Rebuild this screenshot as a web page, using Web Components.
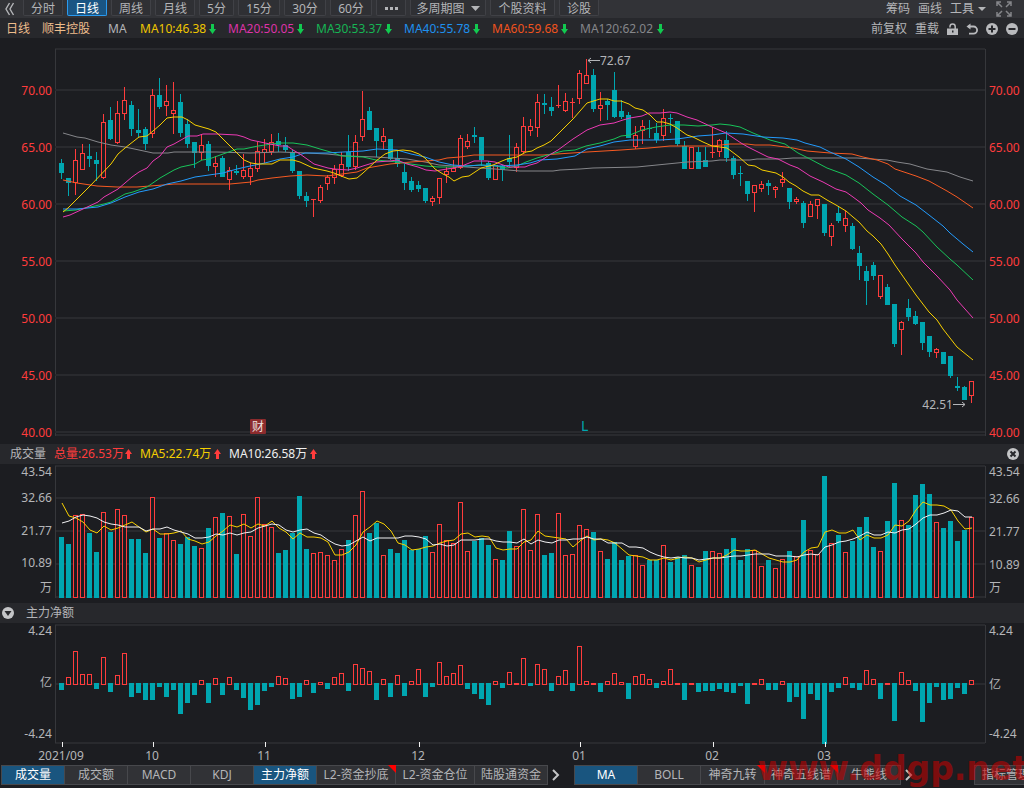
<!DOCTYPE html>
<html lang="zh-CN">
<head>
<meta charset="utf-8">
<title>顺丰控股 日线</title>
<style>
html,body{margin:0;background:#1c1d21;overflow-x:hidden}
body{font-family:"Noto Sans","Noto Sans CJK SC",sans-serif;font-size:12px;line-height:16px;color:#b4b5b8}
</style>
</head>
<body>
<stock-app></stock-app>

<script>
const UP = '#ff3c3c', DOWN = '#00a6b0', GRID = '#292a2e', FRAME = '#36373b', TEXT = '#b4b5b8';
const LEFT = 55, RIGHT = 39, BASE = 930;

/* each candle: direction, high, body top, body bottom, low */
const candles = `D159,163,173,179 D178,178,183,196 U149,160,183,195 U144,153,170,170 D144,156,159,167 D152,160,164,181 U114,122,178,179 D107,120,139,140 U101,113,143,144 U87,100,114,120
D101,105,129,136 D109,130,133,137 D127,129,144,150 U89,95,134,138 D78,95,107,109 U85,101,106,116 U82,110,114,134 D94,102,133,137 D119,124,144,148 D142,142,153,168
U134,145,153,160 D141,144,166,171 U156,163,167,177 D156,158,177,177 U167,170,180,190 D165,171,173,175 U154,170,177,179 U163,168,177,185 U142,151,169,172 U139,149,153,163
U134,142,152,155 D133,141,145,152 D137,145,150,152 D150,152,171,173 D171,171,196,199 D192,196,201,207 U199,199,200,217 U185,187,201,203 U175,177,184,190 U165,169,178,184
U152,164,176,177 D135,152,167,171 U135,142,167,170 U91,119,137,141 D107,111,130,130 D128,128,141,157 U128,136,142,149 D139,139,159,160 D150,158,164,167 D164,172,183,190
D177,181,190,192 D181,185,189,192 D188,188,201,203 U196,198,202,206 U178,178,198,204 U167,171,175,183 U160,168,172,172 U135,138,168,169 U134,141,147,149 D127,135,137,143
D137,137,160,166 D161,163,178,180 U165,165,180,180 D165,166,170,181 D135,158,162,168 U143,147,168,172 U117,126,152,153 U119,126,131,136 U94,102,128,137 D94,103,105,114
D97,107,111,116 U85,105,106,108 U93,101,111,112 U98,102,103,118 U70,73,99,104 U59,75,84,84 D69,75,109,112 U92,105,109,121 D99,101,105,120 D72,90,117,118
D100,111,117,119 D112,115,138,138 U126,135,147,149 U120,126,131,144 D120,128,129,138 D123,133,140,143 U109,118,136,141 D114,118,119,133 D121,121,144,146 D141,146,169,169
U147,147,169,169 D147,152,169,169 D147,160,167,167 U127,152,153,158 U139,140,152,157 D131,140,158,162 D156,158,175,179 D166,173,174,186 D181,181,194,201 U185,185,193,212
U181,184,189,192 D180,183,186,195 U186,187,190,198 U172,179,183,187 D188,188,202,209 U197,199,202,204 D201,203,223,228 U201,204,217,217 U199,199,206,219 D204,204,233,236
U223,225,237,246 D207,213,221,223 U211,218,226,232 D223,226,249,250 D246,253,266,280 D266,271,281,305 D262,265,276,280 U275,275,297,299 D284,287,305,305 D304,304,344,347
U321,322,330,355 D299,308,317,321 D311,316,324,325 D322,322,343,350 D336,336,352,357 U348,349,353,358 D352,352,364,364 D356,356,376,378 D377,386,388,391 D386,387,400,400 U381,381,396,403`
  .split(/\s+/).map(s => ({up: s[0] === 'U', v: s.slice(1).split(',').map(Number)}));

const nums = s => s.trim().split(/\s+/).map(Number);

const volume = nums(`537 544 515 514 533 552 512 532 509 515 539 539 553 497 538 533 540 544 537 546 548 528 517 513 516 554 514 536 497 524 527 553 550 533 496 549 553 552 555 560
549 540 515 491 533 523 555 549 553 540 550 549 536 552 524 540 543 502 551 541 538 545 559 560 531 546 509 550 514 555 553 513 555 554 525 529 532 551 559 542
560 556 555 565 560 560 545 562 557 555 565 567 551 551 553 549 538 560 549 550 566 560 568 559 551 556 520 550 554 476 543 535 552 541 527 517 547 551 521 483
520 525 495 484 494 522 528 521 541 530 517`);

const volMa5 = nums(`503 516 518 522 530 533 526 530 528 525 522 527 532 529 534 534 533 531 539 541 544 542 536 531 525 527 524 528 524 526 521 528 532 539 533 537 537 538 542 555
555 552 545 532 527 521 524 531 543 545 550 549 547 546 543 541 540 534 533 537 536 537 548 550 549 549 542 540 531 536 537 538 539 547 541 536 540 539 540 543
549 555 556 557 560 560 558 560 558 557 558 562 560 558 558 555 550 551 551 550 554 558 560 562 562 560 552 548 547 532 530 533 533 530 540 535 538 538 535 525
526 521 510 502 505 505 506 510 521 529 528`);

const volMa10 = nums(`523 521 517 515 516 518 522 524 525 527 527 527 531 529 529 527 530 532 534 538 538 537 534 535 533 535 533 532 528 526 524 525 530 532 530 529 533 535 540 544
546 545 541 537 541 538 538 538 538 536 536 537 539 545 544 546 545 540 540 540 539 539 541 542 542 543 539 544 540 542 543 540 540 539 539 537 539 539 543 543
543 547 547 548 552 555 557 558 557 558 558 560 559 558 558 557 556 556 555 554 554 554 556 556 556 557 555 554 555 547 545 542 541 539 536 532 535 535 532 533
530 529 524 518 515 515 513 510 511 517 517`);

/* end of each net-flow bar; the zero line is at 684 */
const flow = nums(`690 677 651 674 674 689 657 692 675 653 697 693 700 700 687 697 690 714 703 695 680 703 678 695 677 690 698 710 705 691 687 676 678 699 697 680 693 682 689 677
673 691 664 668 671 700 679 697 675 696 681 669 697 687 662 676 673 665 689 694 699 705 681 688 672 683 658 686 664 669 691 676 670 691 646 681 683 692 681 673
682 699 676 674 679 688 681 669 683 700 683 692 691 691 689 692 693 686 704 683 679 690 690 681 702 697 719 694 700 744 692 688 677 688 690 670 679 699 683 721
672 680 691 722 703 687 700 699 688 694 680`);

const averages = {
  '#85868a': '63,133 77,137 85,138 98,142 111,145 125,147 139,150 153,153 168,153 174,152 217,152 250,153 280,152 307,153 327,154 347,156 376,157 407,159 425,162 439,165 453,166 480,168 495,169 520,171 553,171 560,170 580,169 593,168 637,167 667,164 687,162 712,161 720,160 750,160 757,159 780,159 793,158 857,158 887,160 897,162 910,164 927,169 947,172 960,177 973,181',
  '#f75a22': '63,180 77,183 97,186 117,187 137,187 163,185 174,184 230,184 251,182 258,180 272,178 290,176 307,175 327,176 357,172 367,168 390,164 411,162 439,160 447,158 460,157 474,155 520,155 543,155 557,154 587,152 621,150 635,149 649,148 670,146 712,146 730,144 747,144 755,145 770,145 793,148 807,151 830,153 852,154 863,157 877,160 888,164 895,169 916,176 929,181 947,191 957,197 973,208',
  '#18c45a': '63,211 76,210 90,207 104,204 111,202 118,198 125,194 133,192 147,187 160,178 174,170 181,167 195,164 202,160 209,159 223,154 237,149 244,149 258,146 272,144 280,143 293,143 307,145 320,149 334,153 341,156 363,157 376,160 387,161 397,162 411,164 425,166 439,167 453,167 467,166 481,165 495,166 507,168 517,166 526,162 537,158 551,154 563,151 575,150 586,146 600,143 614,139 621,136 630,135 642,130 656,127 670,125 684,125 698,126 712,125 720,124 730,125 740,127 753,133 770,140 785,144 798,153 810,159 827,168 846,175 859,183 873,194 888,205 902,217 916,226 923,232 937,247 950,259 957,265 973,280',
  '#239bfc': '63,209 77,209 98,207 111,203 125,197 139,192 153,189 167,184 181,181 195,177 209,175 223,173 237,169 250,166 265,163 280,159 293,157 305,153 327,153 343,152 363,151 377,149 397,150 411,154 425,157 439,162 453,165 467,166 481,165 500,166 517,165 530,163 540,160 557,159 575,156 587,149 600,146 614,142 630,140 660,140 677,139 698,136 712,135 726,133 743,134 763,137 783,138 797,140 805,143 820,147 830,152 846,159 859,167 873,177 886,185 900,196 916,205 929,215 943,226 950,233 963,244 973,252',
  '#ec3ab4': '63,217 70,215 83,209 98,202 104,197 111,193 118,189 132,177 139,172 147,168 153,161 160,156 167,147 174,144 181,140 188,136 197,136 203,134 217,134 237,135 244,137 251,140 265,143 280,146 287,146 293,150 300,154 307,159 314,164 328,168 334,169 348,170 357,168 363,166 376,162 390,161 397,160 407,164 418,167 426,170 435,171 447,169 453,168 462,166 474,161 487,161 495,162 503,165 509,167 525,167 530,165 537,163 551,154 558,150 573,139 587,130 600,125 614,123 623,120 630,118 642,116 649,113 660,113 670,112 677,113 687,117 697,120 712,127 726,133 741,143 748,147 768,157 778,159 790,165 798,168 810,176 823,182 836,189 846,192 853,197 861,203 868,210 880,218 889,225 902,239 916,253 923,262 937,276 950,290 957,300 973,318',
  '#f8d000': '63,212 68,208 90,186 111,164 118,154 125,148 139,137 147,136 153,131 160,125 167,118 174,117 182,117 188,120 195,125 209,129 216,132 223,139 237,153 244,160 251,163 258,164 272,164 280,160 293,160 300,162 313,168 327,171 334,173 341,176 349,179 357,178 363,173 376,161 385,154 393,151 403,150 411,151 419,154 425,158 435,169 443,174 449,177 454,181 462,177 469,176 481,168 493,165 502,161 507,159 517,157 526,152 532,151 537,148 544,145 551,141 558,134 573,119 587,103 600,99 608,99 614,101 621,101 629,104 635,108 643,110 650,115 657,122 663,122 670,124 677,128 687,135 693,137 703,142 712,146 720,147 727,148 739,157 748,165 755,166 762,170 776,173 783,177 789,182 796,186 803,191 811,195 819,195 827,200 836,205 846,211 853,217 859,222 867,231 873,236 881,244 888,254 895,265 902,275 916,295 929,312 937,320 943,329 950,338 957,347 973,360'
};

/* Shared drawing surface: x positions follow the element's width. */
class ChartBase extends HTMLElement {
  connectedCallback() {
    if (!this.shadowRoot) this.attachShadow({mode: 'open'});
    this.draw();
    new ResizeObserver(() => this.draw()).observe(this);
  }
  draw() {
    const w = Math.max(400, this.clientWidth);
    if (w === this.w) return;
    this.w = w;
    this.k = (w - LEFT - RIGHT) / BASE;
    const [top, height] = this.frame;
    this.shadowRoot.innerHTML = `<style>
      :host{display:block;min-width:0}
      svg{display:block;width:100%;height:${height}px;font-size:12px}
      </style><svg viewBox="0 ${top} ${w} ${height}" role="img" aria-label="${this.label}">${this.content()}</svg>`;
  }
  px(x) { return Math.round(LEFT + (x - LEFT) * this.k); }
  right() { return this.w - RIGHT; }
  rule(y) { return `<rect x="${LEFT}" y="${y - 1}" width="${this.right() - LEFT}" height="2" fill="${GRID}"/>`; }
  sides(y1, y2) {
    return [LEFT, this.right()].map(x => `<rect x="${x}" y="${y1}" width="1" height="${y2 - y1}" fill="${FRAME}"/>`).join('');
  }
  axis(text, left, right, fill = TEXT) {
    return `<text x="52" y="${left + 5}" text-anchor="end" fill="${fill}">${text}</text>
      <text x="${this.w - 35}" y="${right + 5}" fill="${fill}">${text}</text>`;
  }
  bar(i, y1, y2, up) {
    const x = this.px(59 + 7 * i), h = Math.max(1, y2 - y1);
    return up && h > 1
      ? `<rect x="${x + .5}" y="${y1 + .5}" width="4" height="${h - 1}" fill="#1c1d21" stroke="${UP}"/>`
      : `<rect x="${x}" y="${y1}" width="5" height="${h}" fill="${up ? UP : DOWN}"/>`;
  }
  line(points, color) {
    return `<polyline points="${points.map(([x, y]) => `${this.px(x)},${y}`).join(' ')}" fill="none" stroke="${color}" stroke-width="1"/>`;
  }
}

customElements.define('price-chart', class extends ChartBase {
  frame = [38, 406];
  label = 'K线图';
  content() {
    let s = this.rule(49) + this.rule(435) + this.sides(49, 436);
    for (let p = 70, y = 90; p >= 40; p -= 5, y += 57) s += this.rule(y) + this.axis(p.toFixed(2), y, y, UP);
    candles.forEach((c, i) => {
      const [hi, a, b, lo] = c.v, x = this.px(59 + 7 * i) + 2;
      s += `<rect x="${x}" y="${hi}" width="1" height="${Math.max(1, lo - hi)}" fill="${c.up ? UP : DOWN}"/>` + this.bar(i, a, b, c.up);
    });
    for (const [color, pts] of Object.entries(averages)) s += this.line(pts.split(' ').map(p => p.split(',').map(Number)), color);
    const hi = this.px(588), lo = this.px(965), cai = this.px(250), l = this.px(582);
    s += `<path d="M${hi} 60.500h12M${hi + 3} 58l-3 2.500 3 2.500M${lo} 404.500h-12M${lo - 3} 402l3 2.500-3 2.500" fill="none" stroke="${TEXT}"/>
      <text x="${hi + 12}" y="65" fill="${TEXT}">72.67</text>
      <text x="${lo - 12}" y="409" text-anchor="end" fill="${TEXT}">42.51</text>
      <rect x="${cai}" y="419" width="16" height="15" rx="1" fill="#8c2b2d"/>
      <text x="${cai + 2}" y="431" fill="#f0e0e0">财</text>
      <text x="${l - 1}" y="431" font-size="14" fill="${DOWN}">L</text>`;
    return s;
  }
});

customElements.define('volume-chart', class extends ChartBase {
  frame = [464, 139];
  label = '成交量图';
  content() {
    let s = [466, 498, 531, 564, 597].map(y => this.rule(y)).join('') + this.sides(466, 598);
    s += this.axis('43.54', 471, 471) + this.axis('32.66', 497, 498) + this.axis('21.77', 530, 531) + this.axis('10.89', 562, 564) + this.axis('万', 587, 587);
    volume.forEach((y, i) => s += this.bar(i, y, 598, candles[i].up));
    const at = a => a.map((y, i) => [62 + 7 * i, y]);
    return s + this.line(at(volMa5), '#f8d000') + this.line(at(volMa10), '#f0f0f2');
  }
});

customElements.define('flow-chart', class extends ChartBase {
  frame = [623, 141];
  label = '主力净额图';
  content() {
    let s = [625, 684, 743].map(y => this.rule(y)).join('') + this.sides(625, 743);
    s += this.axis('4.24', 630, 630) + this.axis('亿', 682, 684) + this.axis('-4.24', 733, 733);
    flow.forEach((y, i) => s += y < 684 ? this.bar(i, y, 685, true) : this.bar(i, 683, y, false));
    for (const [t, i] of [['2021/09', 0], ['10', 13], ['11', 29], ['12', 51], ['01', 74], ['02', 93], ['03', 109]]) {
      const x = this.px(62 + 7 * i);
      s += `<rect x="${x}" y="742" width="1" height="5" fill="#f0f0f0"/><text x="${x - 1}" y="760" text-anchor="middle" fill="${TEXT}">${t}</text>`;
    }
    return s;
  }
});

const define = (name, html, ready) => {
  const t = document.createElement('template');
  t.innerHTML = html;
  customElements.define(name, class extends HTMLElement {
    connectedCallback() {
      if (this.shadowRoot) return;
      this.attachShadow({mode: 'open'}).append(t.content.cloneNode(true));
      if (ready) ready(this, this.shadowRoot);
    }
  });
};

const reset = `button{font:inherit;color:inherit;background:none;border:0;padding:0;margin:0;white-space:nowrap;display:flex;align-items:center;justify-content:center}`;

define('tool-button', `<style>${reset}
  :host{display:block;flex:none;width:var(--w,40px)}
  button{width:100%;height:16px;box-sizing:border-box;border:1px solid #404146;border-top:0;border-radius:0 0 2px 2px;padding-top:2px;background:#2f3034}
  :host([active]) button{background:#1a5583;border-color:#2a9bf0;color:#fff}
  </style><button type="button"><slot></slot></button>`);

define('plain-button', `<style>${reset}
  :host{display:block;flex:none}
  </style><button type="button"><slot></slot></button>`,
  (host, root) => { const l = host.getAttribute('label'); if (l) root.querySelector('button').setAttribute('aria-label', l); });

define('tab-button', `<style>${reset}
  :host{display:block;flex:none;width:var(--w,63px);position:relative}
  button{width:100%;height:20px;box-sizing:border-box;background:#313236;border:1px solid #47484c;border-left-width:0}
  :host([first]) button{border-left-width:1px}
  :host([active]) button{background:#19557f;color:#fff}
  i{display:none;position:absolute;right:0;top:0;border-top:8px solid #ff0000;border-left:8px solid transparent}
  :host([hot]) i{display:block}
  </style><button type="button"><slot></slot></button><i></i>`);

define('legend-value', `<style>
  :host{display:flex;flex:none;align-items:center;justify-content:space-between;width:var(--w,76px);white-space:nowrap}
  svg{display:block;width:7px;height:10px;fill:#12c950}
  :host([rise]) svg{transform:rotate(180deg);fill:#ff3c3c}
  </style><span><slot></slot></span><svg viewBox="0 0 7 10"><path d="M2 0h3v5h2L3.500 10 0 5h2z"/></svg>`);

define('panel-header', `<style>
  :host{display:flex;align-items:center;gap:8px;height:20px;box-sizing:border-box;padding:0 5px 0 10px;background:#27282c}
  ::slotted([slot=end]){margin-left:auto}
  </style><slot></slot><slot name="end"></slot>`);

define('stock-app', `<style>
  :host{display:block;overflow:hidden;background:#1c1d21;position:relative}
  svg{display:block;flex:none}
  .bar{display:flex;align-items:center;height:18px;background:#323337}
  .tools{display:flex;gap:4px;align-self:flex-start;margin-left:8px}
  .end{display:flex;align-items:center;margin-left:auto;gap:8px}
  .info{display:flex;align-items:center;height:20px;box-sizing:border-box;padding:2px 6px 0;background:#27282c}
  .name{color:#eebd8c;margin-right:12px}
  .ind{margin-left:6px;width:32px}
  .legend{display:flex;gap:12px}
  .down{margin-left:6px}
  .tabs{display:flex;align-items:center;height:24px;padding:0 0 2px 1px;box-sizing:border-box}
  .tabs>svg{margin:0 14px 0 4px}
  .manage{margin-left:auto;margin-right:-14px}
  .mark{position:absolute;right:-4px;bottom:-1px;font:bold 33px/40px "DejaVu Sans",sans-serif;color:#cd0000;opacity:.55;pointer-events:none}
  </style>
  <nav class="bar" aria-label="周期">
    <plain-button label="收起" style="margin-left:5px"><svg width="10" height="14" viewBox="0 0 10 14" fill="none" stroke="#b4b5b8" stroke-width="1.400"><path d="M4.500 1 1 7l3.500 6M8.500 1 5 7l3.500 6"/></svg></plain-button>
    <div class="tools">
      <tool-button>分时</tool-button><tool-button active>日线</tool-button><tool-button>周线</tool-button><tool-button>月线</tool-button>
      <tool-button style="--w:35px">5分</tool-button><tool-button style="--w:42px">15分</tool-button><tool-button style="--w:42px">30分</tool-button><tool-button style="--w:42px">60分</tool-button>
      <tool-button style="--w:30px"><svg width="14" height="4" viewBox="0 0 14 4" fill="#b4b5b8"><path d="M1 0h3v3H1zM6 0h3v3H6zM11 0h3v3h-3z"/></svg></tool-button>
      <tool-button style="--w:76px">多周期图<svg class="down" width="9" height="5" viewBox="0 0 9 5" fill="#b4b5b8"><path d="M0 0h9L4.500 5z"/></svg></tool-button>
      <tool-button style="--w:65px">个股资料</tool-button><tool-button>诊股</tool-button>
    </div>
    <div class="end" style="margin-right:12px">
      <plain-button>筹码</plain-button><plain-button>画线</plain-button>
      <plain-button>工具<svg style="margin-left:4px" width="8" height="4" viewBox="0 0 8 4" fill="#b4b5b8"><path d="M0 0h8L4 4z"/></svg></plain-button>
      <plain-button label="全屏" style="margin-left:2px"><svg width="16" height="16" viewBox="0 0 16 16" fill="none" stroke="#85868a" stroke-width="1.500"><path d="M1 5V1h4M1 1l5 5M11 1h4v4M15 1l-5 5M1 11v4h4M1 15l5-5M15 11v4h-4M15 15l-5-5"/></svg></plain-button>
    </div>
  </nav>
  <div class="info">
    <span class="name">日线</span><span class="name">顺丰控股</span><span class="ind">MA</span>
    <div class="legend">
      <legend-value style="color:#efc600">MA10:46.38</legend-value><legend-value style="color:#dd33a8">MA20:50.05</legend-value><legend-value style="color:#16b554">MA30:53.37</legend-value>
      <legend-value style="color:#1e90ee">MA40:55.78</legend-value><legend-value style="color:#f0531e">MA60:59.68</legend-value><legend-value style="color:#85868a;--w:84px">MA120:62.02</legend-value>
    </div>
    <div class="end">
      <plain-button>前复权</plain-button><plain-button>重载</plain-button>
      <plain-button label="锁定"><svg width="11" height="12" viewBox="0 0 11 12"><path d="M3 4.500V3.500a2.500 2.500 0 0 1 5.200 0V6" fill="none" stroke="#b9babd" stroke-width="1.500"/><path d="M0 5.500h11V12H0z" fill="#b9babd"/><path d="M5 7.500h1.500v2H5z" fill="#27282c"/></svg></plain-button>
      <plain-button label="撤销"><svg width="12" height="12" viewBox="0 0 12 12" fill="none" stroke="#b9babd" stroke-width="1.800"><path d="M2 3.500h5.500a3.600 3.600 0 0 1 0 7.200H3"/><path d="M4.500.500v6L.500 3.500z" fill="#b9babd" stroke="none"/></svg></plain-button>
      <plain-button label="放大"><svg width="12" height="12" viewBox="0 0 12 12"><circle cx="6" cy="6" r="6" fill="#b9babd"/><path d="M6 2.500v7M2.500 6h7" stroke="#27282c" stroke-width="2"/></svg></plain-button>
      <plain-button label="缩小"><svg width="12" height="12" viewBox="0 0 12 12"><circle cx="6" cy="6" r="6" fill="#b9babd"/><path d="M2.500 6h7" stroke="#27282c" stroke-width="2"/></svg></plain-button>
    </div>
  </div>
  <price-chart></price-chart>
  <panel-header>
    <span>成交量</span>
    <legend-value rise style="color:#ff3c3c;--w:78px">总量:26.53万</legend-value>
    <legend-value rise style="color:#f5d000;--w:81px">MA5:22.74万</legend-value>
    <legend-value rise style="color:#f0f0f0;--w:88px">MA10:26.58万</legend-value>
    <plain-button slot="end" label="关闭"><svg width="12" height="12" viewBox="0 0 12 12"><circle cx="6" cy="6" r="6" fill="#c4c5c7"/><path d="m3.500 3.500 5 5m0-5-5 5" stroke="#27282c" stroke-width="2"/></svg></plain-button>
  </panel-header>
  <volume-chart></volume-chart>
  <panel-header style="padding-left:2px;gap:12px">
    <plain-button label="展开"><svg width="12" height="12" viewBox="0 0 12 12"><circle cx="6" cy="6" r="6" fill="#c4c5c7"/><path d="M2.500 4h7L6 9z" fill="#27282c"/></svg></plain-button>
    <span>主力净额</span>
  </panel-header>
  <flow-chart></flow-chart>
  <nav class="tabs" aria-label="指标">
    <tab-button first active style="--w:64px">成交量</tab-button><tab-button>成交额</tab-button><tab-button>MACD</tab-button><tab-button>KDJ</tab-button><tab-button active>主力净额</tab-button>
    <tab-button hot style="--w:79px">L2-资金抄底</tab-button><tab-button style="--w:79px">L2-资金仓位</tab-button><tab-button style="--w:73px">陆股通资金</tab-button>
    <svg width="8" height="12" viewBox="0 0 8 12" fill="none" stroke="#c4c5c7" stroke-width="2"><path d="m1 1 5 5-5 5"/></svg>
    <tab-button first active style="--w:64px">MA</tab-button><tab-button>BOLL</tab-button><tab-button hot style="--w:64px">神奇九转</tab-button><tab-button hot style="--w:73px">神奇五线谱</tab-button><tab-button>牛熊线</tab-button>
    <svg width="8" height="12" viewBox="0 0 8 12" fill="none" stroke="#c4c5c7" stroke-width="2"><path d="m1 1 5 5-5 5"/></svg>
    <tab-button first class="manage" style="--w:64px">指标管理</tab-button>
  </nav>
  <div class="mark">www.ddgp.net</div>`);
</script>
</body>
</html>
